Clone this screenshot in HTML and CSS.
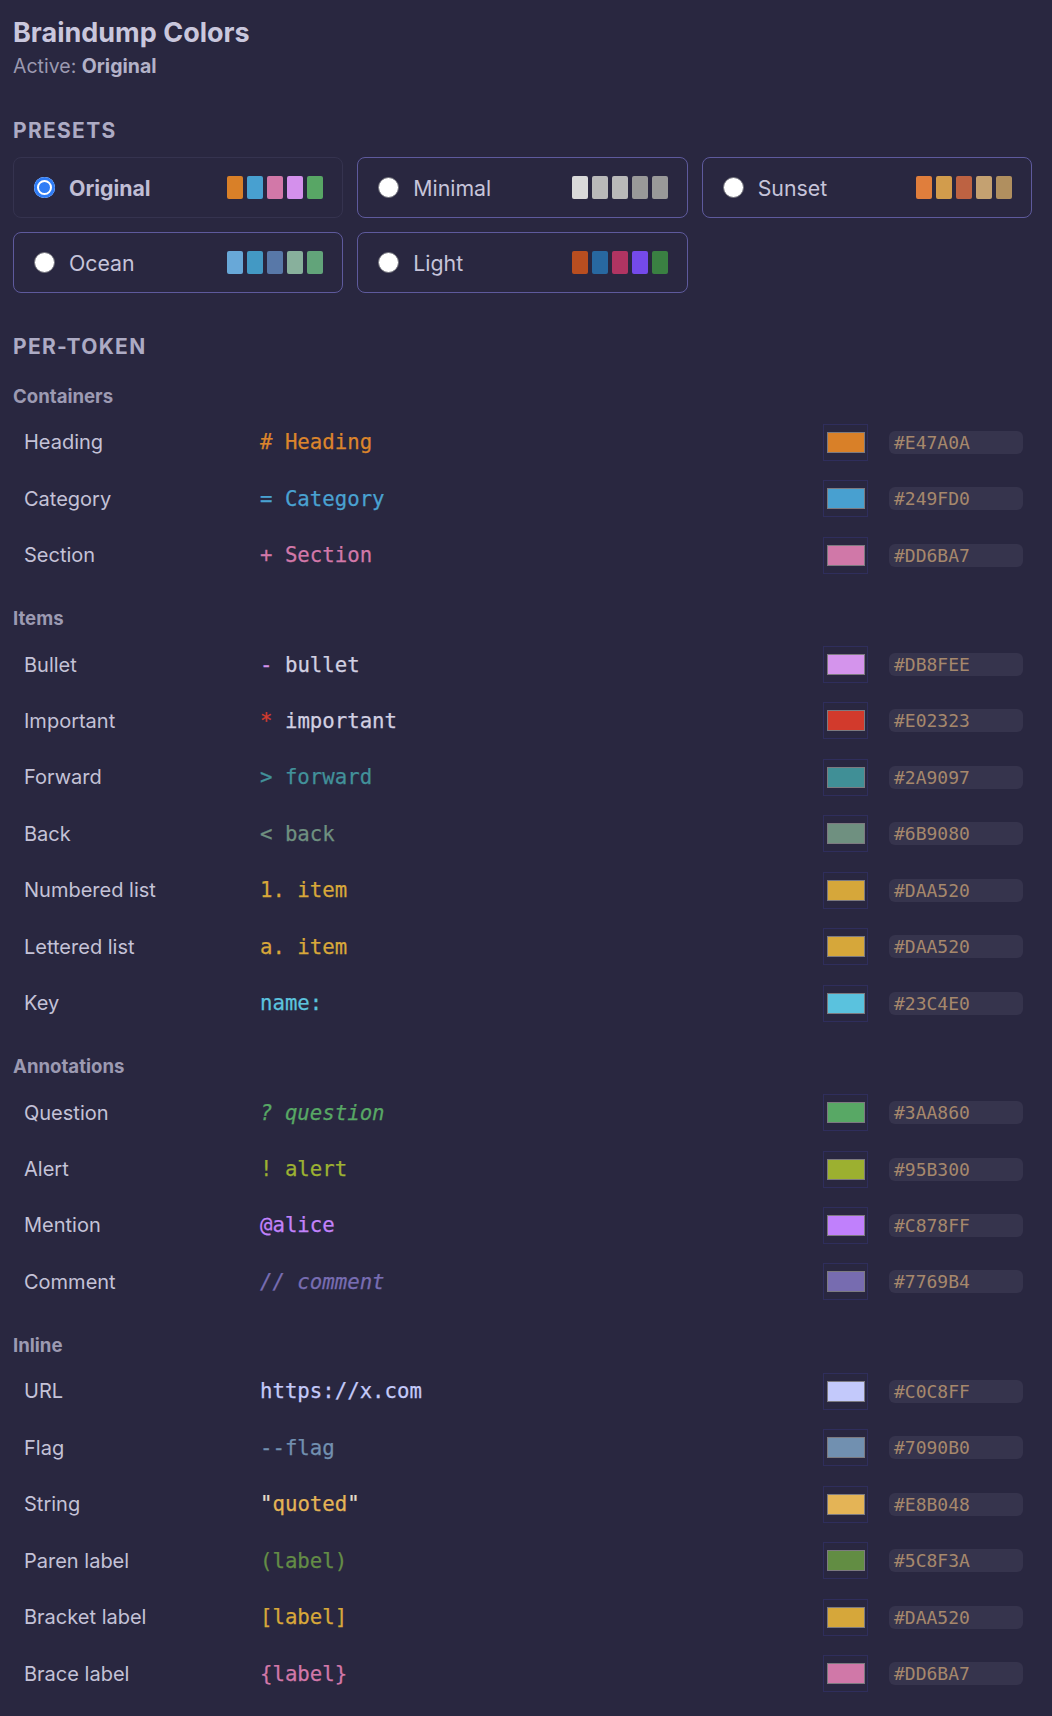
FILE: index.html
```html
<!DOCTYPE html>
<html lang="en">
<head>
    <meta charset="UTF-8">
    <meta name="viewport" content="width=device-width, initial-scale=1.0">
    <title>Braindump Colors</title>
    <link rel="stylesheet" href="styles.css">
</head>
<body>
    <h1>Braindump Colors</h1>
    <p class="active-line">Active: <b>Original</b></p>

    <h2 class="section-title">Presets</h2>
    <div class="preset-grid">
        <div class="preset is-active">
            <span class="radio checked"></span>
            <span class="preset-name">Original</span>
            <span class="chips">
                <i style="background:#d98028"></i><i style="background:#48a0d0"></i><i style="background:#d278a8"></i><i style="background:#d490ec"></i><i style="background:#58a665"></i>
            </span>
        </div>
        <div class="preset">
            <span class="radio"></span>
            <span class="preset-name">Minimal</span>
            <span class="chips">
                <i style="background:#d9d9d9"></i><i style="background:#b9b9b9"></i><i style="background:#b9b9b9"></i><i style="background:#999999"></i><i style="background:#999999"></i>
            </span>
        </div>
        <div class="preset">
            <span class="radio"></span>
            <span class="preset-name">Sunset</span>
            <span class="chips">
                <i style="background:#e07e3c"></i><i style="background:#d29c4c"></i><i style="background:#bd6242"></i><i style="background:#c4a171"></i><i style="background:#b08f5f"></i>
            </span>
        </div>
        <div class="preset">
            <span class="radio"></span>
            <span class="preset-name">Ocean</span>
            <span class="chips">
                <i style="background:#68a8d8"></i><i style="background:#4399c4"></i><i style="background:#5878a8"></i><i style="background:#88b09c"></i><i style="background:#62a47a"></i>
            </span>
        </div>
        <div class="preset">
            <span class="radio"></span>
            <span class="preset-name">Light</span>
            <span class="chips">
                <i style="background:#b84e20"></i><i style="background:#2868a0"></i><i style="background:#b03462"></i><i style="background:#744aea"></i><i style="background:#3a8042"></i>
            </span>
        </div>
    </div>

    <h2 class="section-title token-title">Per-token</h2>

    <h3 class="group first">Containers</h3>
    <div class="token-row">
        <span class="token-name">Heading</span>
        <code class="sample" style="color:#dc852c"># Heading</code>
        <span class="picker"><span class="swatch" style="background:#d98028"></span></span>
        <span class="hex">#E47A0A</span>
    </div>
    <div class="token-row">
        <span class="token-name">Category</span>
        <code class="sample" style="color:#4aa2d2">= Category</code>
        <span class="picker"><span class="swatch" style="background:#48a0d0"></span></span>
        <span class="hex">#249FD0</span>
    </div>
    <div class="token-row">
        <span class="token-name">Section</span>
        <code class="sample" style="color:#d278a9">+ Section</code>
        <span class="picker"><span class="swatch" style="background:#d078a8"></span></span>
        <span class="hex">#DD6BA7</span>
    </div>

    <h3 class="group">Items</h3>
    <div class="token-row">
        <span class="token-name">Bullet</span>
        <code class="sample"><span style="color:#d494ec">-</span> bullet</code>
        <span class="picker"><span class="swatch" style="background:#d494ec"></span></span>
        <span class="hex">#DB8FEE</span>
    </div>
    <div class="token-row">
        <span class="token-name">Important</span>
        <code class="sample"><span style="color:#d43c2e">*</span> important</code>
        <span class="picker"><span class="swatch" style="background:#d23a2c"></span></span>
        <span class="hex">#E02323</span>
    </div>
    <div class="token-row">
        <span class="token-name">Forward</span>
        <code class="sample" style="color:#42919a">&gt; forward</code>
        <span class="picker"><span class="swatch" style="background:#408f96"></span></span>
        <span class="hex">#2A9097</span>
    </div>
    <div class="token-row">
        <span class="token-name">Back</span>
        <code class="sample" style="color:#6f9080">&lt; back</code>
        <span class="picker"><span class="swatch" style="background:#6f9080"></span></span>
        <span class="hex">#6B9080</span>
    </div>
    <div class="token-row">
        <span class="token-name">Numbered list</span>
        <code class="sample" style="color:#d8a83a">1. item</code>
        <span class="picker"><span class="swatch" style="background:#d6a73a"></span></span>
        <span class="hex">#DAA520</span>
    </div>
    <div class="token-row">
        <span class="token-name">Lettered list</span>
        <code class="sample" style="color:#d8a83a">a. item</code>
        <span class="picker"><span class="swatch" style="background:#d6a73a"></span></span>
        <span class="hex">#DAA520</span>
    </div>
    <div class="token-row">
        <span class="token-name">Key</span>
        <code class="sample" style="color:#5cc3de">name:</code>
        <span class="picker"><span class="swatch" style="background:#5ac2de"></span></span>
        <span class="hex">#23C4E0</span>
    </div>

    <h3 class="group">Annotations</h3>
    <div class="token-row">
        <span class="token-name">Question</span>
        <code class="sample italic" style="color:#58a865">? question</code>
        <span class="picker"><span class="swatch" style="background:#58a865"></span></span>
        <span class="hex">#3AA860</span>
    </div>
    <div class="token-row">
        <span class="token-name">Alert</span>
        <code class="sample" style="color:#9db232">! alert</code>
        <span class="picker"><span class="swatch" style="background:#9cb030"></span></span>
        <span class="hex">#95B300</span>
    </div>
    <div class="token-row">
        <span class="token-name">Mention</span>
        <code class="sample" style="color:#c282fb">@alice</code>
        <span class="picker"><span class="swatch" style="background:#c080fc"></span></span>
        <span class="hex">#C878FF</span>
    </div>
    <div class="token-row">
        <span class="token-name">Comment</span>
        <code class="sample italic" style="color:#786db2">// comment</code>
        <span class="picker"><span class="swatch" style="background:#776cb0"></span></span>
        <span class="hex">#7769B4</span>
    </div>

    <h3 class="group">Inline</h3>
    <div class="token-row">
        <span class="token-name">URL</span>
        <code class="sample" style="color:#c4caf9">https://x.com</code>
        <span class="picker"><span class="swatch" style="background:#c3c9fb"></span></span>
        <span class="hex">#C0C8FF</span>
    </div>
    <div class="token-row">
        <span class="token-name">Flag</span>
        <code class="sample" style="color:#7290b0">--flag</code>
        <span class="picker"><span class="swatch" style="background:#7190b0"></span></span>
        <span class="hex">#7090B0</span>
    </div>
    <div class="token-row">
        <span class="token-name">String</span>
        <code class="sample" style="color:#e4b456"><span class="quote">"</span>quoted<span class="quote">"</span></code>
        <span class="picker"><span class="swatch" style="background:#e4b456"></span></span>
        <span class="hex">#E8B048</span>
    </div>
    <div class="token-row">
        <span class="token-name">Paren label</span>
        <code class="sample" style="color:#648d46">(label)</code>
        <span class="picker"><span class="swatch" style="background:#628d43"></span></span>
        <span class="hex">#5C8F3A</span>
    </div>
    <div class="token-row">
        <span class="token-name">Bracket label</span>
        <code class="sample" style="color:#d8a83a">[label]</code>
        <span class="picker"><span class="swatch" style="background:#d6a73a"></span></span>
        <span class="hex">#DAA520</span>
    </div>
    <div class="token-row">
        <span class="token-name">Brace label</span>
        <code class="sample" style="color:#d278a9">{label}</code>
        <span class="picker"><span class="swatch" style="background:#d078a8"></span></span>
        <span class="hex">#DD6BA7</span>
    </div>
</body>
</html>
```

FILE: styles.css
```css
html {
    background: #292740;
}
body {
    margin: 0;
    padding: 0 20px 14px 13px;
    font-family: Inter, "Noto Sans", sans-serif;
    color: #c4c2d7;
}
h1 {
    margin: 17px 0 0;
    font-size: 27px;
    line-height: 32px;
    font-weight: 700;
    color: #c9c7dd;
}
.active-line {
    margin: 6px 0 0;
    font-size: 19.5px;
    line-height: 23px;
    color: #9b99b0;
}
.active-line b {
    color: #b3b1c8;
    font-weight: 700;
}
.section-title {
    margin: 41px 0 0;
    font-size: 21px;
    line-height: 24px;
    font-weight: 700;
    letter-spacing: 1.3px;
    text-transform: uppercase;
    color: #adabc4;
}
.token-title {
    margin-top: 42px;
}

/* presets */
.preset-grid {
    display: grid;
    grid-template-columns: repeat(3, 1fr);
    gap: 14px;
    margin-top: 14px;
}
.preset {
    display: flex;
    align-items: center;
    height: 61px;
    box-sizing: border-box;
    padding: 0 19px 0 20px;
    border: 1px solid #5e5a9d;
    border-radius: 8px;
}
.preset.is-active {
    border-color: #35334f;
}
.radio {
    width: 21px;
    height: 21px;
    box-sizing: border-box;
    border-radius: 50%;
    background: #fff;
    border: 1px solid #6e6e78;
}
.radio.checked {
    background: #2f7cf6;
    border: none;
    box-shadow: inset 0 0 0 3px #2f7cf6, inset 0 0 0 5px #fff;
}
.preset-name {
    margin-left: 14px;
    font-size: 21.3px;
    color: #c6c4da;
}
.is-active .preset-name {
    font-weight: 700;
    color: #c0bed5;
}
.chips {
    margin-left: auto;
    display: flex;
    gap: 4px;
}
.chips i {
    display: block;
    width: 16px;
    height: 23px;
    border-radius: 2px;
}

/* per-token */
.group {
    margin: 25px 0 7px;
    font-size: 18.6px;
    line-height: 21px;
    font-weight: 700;
    color: #9c9ab2;
}
.group.first {
    margin-top: 27px;
}
.token-row {
    display: grid;
    grid-template-columns: 215px 1fr 45px 134px;
    column-gap: 21px;
    align-items: center;
    height: 56.45px;
    padding: 0 9px 0 11px;
}
.token-name {
    font-size: 20px;
    color: #c4c2d7;
}
.sample {
    font-family: "DejaVu Sans Mono", "Liberation Mono", monospace;
    font-size: 20.7px;
    color: #d2d0e2;
    -webkit-text-stroke: 0.25px currentColor;
}
.sample.italic {
    font-style: italic;
}
.quote {
    color: #e4dccb;
}
.picker {
    display: flex;
    align-items: center;
    justify-content: center;
    width: 45px;
    height: 37px;
    box-sizing: border-box;
    border: 1px solid #2f2e5c;
}
.swatch {
    width: 38px;
    height: 21px;
    box-sizing: border-box;
    border: 1px solid #7c7a80;
}
.hex {
    height: 23px;
    line-height: 23px;
    padding-left: 5px;
    border-radius: 6px;
    background: #36344d;
    font-family: "DejaVu Sans Mono", "Liberation Mono", monospace;
    font-size: 18px;
    color: #a6886c;
}
```
